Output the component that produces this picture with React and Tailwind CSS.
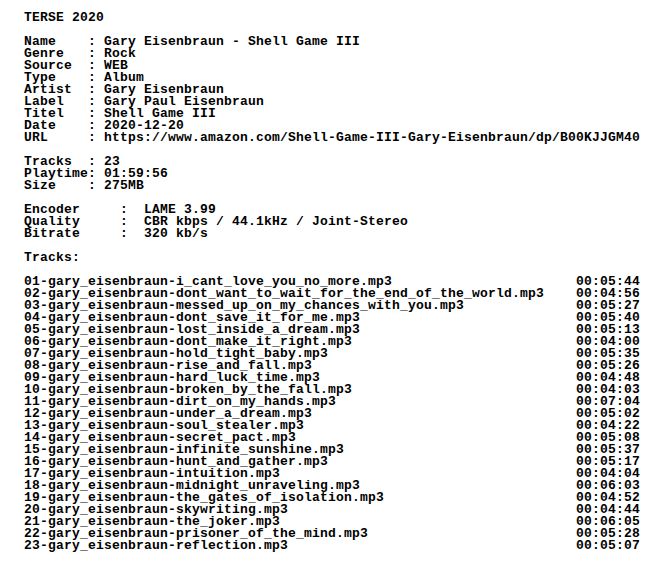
import React from "react";

const header = [
  "TERSE 2020",
  "",
  "Name    : Gary Eisenbraun - Shell Game III",
  "Genre   : Rock",
  "Source  : WEB",
  "Type    : Album",
  "Artist  : Gary Eisenbraun",
  "Label   : Gary Paul Eisenbraun",
  "Titel   : Shell Game III",
  "Date    : 2020-12-20",
  "URL     : https://www.amazon.com/Shell-Game-III-Gary-Eisenbraun/dp/B00KJJGM40",
  "",
  "Tracks  : 23",
  "Playtime: 01:59:56",
  "Size    : 275MB",
  "",
  "Encoder     :  LAME 3.99",
  "Quality     :  CBR kbps / 44.1kHz / Joint-Stereo",
  "Bitrate     :  320 kb/s",
  "",
  "Tracks:",
  "",
];

const tracks = [
  ["01-gary_eisenbraun-i_cant_love_you_no_more.mp3", "00:05:44"],
  ["02-gary_eisenbraun-dont_want_to_wait_for_the_end_of_the_world.mp3", "00:04:56"],
  ["03-gary_eisenbraun-messed_up_on_my_chances_with_you.mp3", "00:05:27"],
  ["04-gary_eisenbraun-dont_save_it_for_me.mp3", "00:05:40"],
  ["05-gary_eisenbraun-lost_inside_a_dream.mp3", "00:05:13"],
  ["06-gary_eisenbraun-dont_make_it_right.mp3", "00:04:00"],
  ["07-gary_eisenbraun-hold_tight_baby.mp3", "00:05:35"],
  ["08-gary_eisenbraun-rise_and_fall.mp3", "00:05:26"],
  ["09-gary_eisenbraun-hard_luck_time.mp3", "00:04:48"],
  ["10-gary_eisenbraun-broken_by_the_fall.mp3", "00:04:03"],
  ["11-gary_eisenbraun-dirt_on_my_hands.mp3", "00:07:04"],
  ["12-gary_eisenbraun-under_a_dream.mp3", "00:05:02"],
  ["13-gary_eisenbraun-soul_stealer.mp3", "00:04:22"],
  ["14-gary_eisenbraun-secret_pact.mp3", "00:05:08"],
  ["15-gary_eisenbraun-infinite_sunshine.mp3", "00:05:37"],
  ["16-gary_eisenbraun-hunt_and_gather.mp3", "00:05:17"],
  ["17-gary_eisenbraun-intuition.mp3", "00:04:04"],
  ["18-gary_eisenbraun-midnight_unraveling.mp3", "00:06:03"],
  ["19-gary_eisenbraun-the_gates_of_isolation.mp3", "00:04:52"],
  ["20-gary_eisenbraun-skywriting.mp3", "00:04:44"],
  ["21-gary_eisenbraun-the_joker.mp3", "00:06:05"],
  ["22-gary_eisenbraun-prisoner_of_the_mind.mp3", "00:05:28"],
  ["23-gary_eisenbraun-reflection.mp3", "00:05:07"],
];

const text = [
  ...header,
  ...tracks.map(([n, t]) => n.padEnd(69, " ") + t),
].join("\n");

export default function App() {
  return (
    <div className="w-[648px] h-[564px] bg-white overflow-hidden">
      <pre className="m-0 pl-6 pt-[12px] text-black font-bold text-[13px] leading-[12px] tracking-[0.2px] whitespace-pre font-['Liberation_Mono',monospace]">
        {text}
      </pre>
    </div>
  );
}
